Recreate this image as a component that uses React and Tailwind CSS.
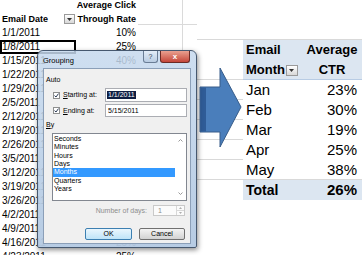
const rows = [
  ["1/1/2011", "10%"],
  ["1/8/2011", "25%"],
  ["1/15/2011", "40%"],
  ["1/22/2011", "18%"],
  ["1/29/2011", "22%"],
  ["2/5/2011", "30%"],
  ["2/12/2011", "28%"],
  ["2/19/2011", "35%"],
  ["2/26/2011", "27%"],
  ["3/5/2011", "20%"],
  ["3/12/2011", "15%"],
  ["3/19/2011", "21%"],
  ["3/26/2011", "19%"],
  ["4/2/2011", "24%"],
  ["4/9/2011", "26%"],
  ["4/16/2011", "25%"],
  ["4/23/2011", "25%"],
];

const months = [
  ["Jan", "23%"],
  ["Feb", "30%"],
  ["Mar", "19%"],
  ["Apr", "25%"],
  ["May", "38%"],
];

function FilterBtn({ className = "" }) {
  return (
    <div
      className={
        "flex items-center justify-center border border-[#9a9a9a] bg-linear-to-b from-white to-[#d8d8d8] " +
        className
      }
    >
      <svg width="5" height="3" viewBox="0 0 5 3">
        <path d="M0 0H5L2.5 3Z" fill="#333" />
      </svg>
    </div>
  );
}

function Check() {
  return (
    <div className="w-[7px] h-[7px] border border-[#8e8f8f] bg-white flex items-center justify-center shrink-0">
      <svg width="5" height="5" viewBox="0 0 5 5">
        <path d="M0.5 2.6L2 4L4.5 0.6" stroke="#2a3a55" strokeWidth="1" fill="none" />
      </svg>
    </div>
  );
}

function Dialog() {
  const items = ["Seconds", "Minutes", "Hours", "Days", "Months", "Quarters", "Years"];
  return (
    <div className="absolute left-[37px] top-[50px] w-[160px] h-[198px] rounded-t-[6px] rounded-b-[2px] border border-[#46586f] bg-linear-to-b from-[#c6d9ee]/85 to-[#b3c9e2]/95 shadow-[1px_2px_5px_rgba(0,0,0,0.45)] flex flex-col px-[5px] pb-[3px] text-[7px] text-black">
      <div className="h-[17px] flex items-start shrink-0">
        <span className="mt-[5px] text-[7.5px] leading-[9px]">Grouping</span>
        <div className="ml-auto mr-[1px] flex gap-[2px]">
          <div className="w-[15px] h-[12px] rounded-b-[3px] border border-t-0 border-[#6a7d95] bg-linear-to-b from-[#e3edf8] to-[#b9cce2] flex items-center justify-center text-[7px] leading-[8px] text-[#2b3b52]">
            ?
          </div>
          <div className="w-[30px] h-[12px] rounded-b-[3px] border border-t-0 border-[#6b2b25] bg-linear-to-b from-[#e8a090] to-[#c4453a] flex items-center justify-center text-[8px] leading-[8px] font-bold text-white">
            x
          </div>
        </div>
      </div>
      <div className="flex-1 border border-[#8b9fb8] bg-[#f0f0f0] flex flex-col">
        <div className="pl-[2px] mt-[7px] leading-[8px]">Auto</div>
        <div className="mt-[4px] h-[14px] flex items-center">
          <div className="w-[61px] flex items-center pl-[9px]">
            <Check />
            <span className="ml-[3px] leading-[8px]">
              <u>S</u>tarting at:
            </span>
          </div>
          <div className="w-[82px] h-full bg-white border border-[#abadb3] flex items-center pl-[1px]">
            <span className="bg-[#0e1d42] text-white px-[1px] leading-[8px]">1/1/2011</span>
          </div>
        </div>
        <div className="mt-[2px] h-[13px] flex items-center">
          <div className="w-[61px] flex items-center pl-[9px]">
            <Check />
            <span className="ml-[3px] leading-[8px]">
              <u>E</u>nding at:
            </span>
          </div>
          <div className="w-[82px] h-full bg-white border border-[#abadb3] flex items-center pl-[2px]">
            <span className="leading-[8px]">5/15/2011</span>
          </div>
        </div>
        <div className="mt-[4px] pl-[2px] leading-[8px]">
          <u>B</u>y
        </div>
        <div className="mt-[4px] ml-[8px] w-[135px] h-[68px] bg-white border border-[#828790] flex">
          <div className="flex-1 flex flex-col pt-[1px]">
            {items.map((it) => (
              <div
                key={it}
                className={
                  "leading-[8.33px] pl-[1px] " + (it === "Months" ? "bg-[#3399ff] text-white" : "")
                }
              >
                {it}
              </div>
            ))}
          </div>
          <div className="w-[11px] flex flex-col items-center justify-between py-[5px]">
            <svg width="5" height="3" viewBox="0 0 5 3">
              <path d="M0.5 2.5L2.5 0.5L4.5 2.5" stroke="#9a9a9a" fill="none" />
            </svg>
            <svg width="5" height="3" viewBox="0 0 5 3">
              <path d="M0.5 0.5L2.5 2.5L4.5 0.5" stroke="#9a9a9a" fill="none" />
            </svg>
          </div>
        </div>
        <div className="mt-[4px] h-[11px] flex items-center justify-end pr-[5px]">
          <span className="mr-[6px] leading-[8px] text-[#8d8d8d]">Number of days:</span>
          <div className="w-[32px] h-full border border-[#c9c9c9] bg-[#fbfbfb] flex">
            <span className="pl-[4px] leading-[9px] text-[#8d8d8d]">1</span>
            <div className="ml-auto w-[8px] flex flex-col border-l border-[#d8d8d8]">
              <div className="flex-1 flex items-center justify-center border-b border-[#d8d8d8]">
                <svg width="3" height="2" viewBox="0 0 3 2">
                  <path d="M0 2L1.5 0L3 2Z" fill="#b0b0b0" />
                </svg>
              </div>
              <div className="flex-1 flex items-center justify-center">
                <svg width="3" height="2" viewBox="0 0 3 2">
                  <path d="M0 0L1.5 2L3 0Z" fill="#b0b0b0" />
                </svg>
              </div>
            </div>
          </div>
        </div>
        <div className="mt-[12px] h-[12px] flex justify-end gap-[7px] pr-[5px]">
          <div className="w-[47px] h-full rounded-[2px] border border-[#3c7fb1] bg-linear-to-b from-[#eaf6fd] to-[#bfe4f8] flex items-center justify-center leading-[8px]">
            OK
          </div>
          <div className="w-[46px] h-full rounded-[2px] border border-[#707070] bg-linear-to-b from-[#f4f4f4] to-[#d2d2d2] flex items-center justify-center leading-[8px]">
            Cancel
          </div>
        </div>
      </div>
    </div>
  );
}

export default function App() {
  return (
    <div className="relative w-[362px] h-[255px] overflow-hidden bg-white flex font-['Liberation_Sans',Arial,sans-serif] text-black">
      {/* left sheet */}
      <div className="w-[138px] shrink-0 flex flex-col text-[10px]">
        <div className="h-[26px] flex shrink-0">
          <div className="w-[76px] flex items-end justify-between pl-[2px] pr-[1px]">
            <span className="font-bold text-[9px] leading-[14px]">Email Date</span>
            <FilterBtn className="w-[11px] h-[10px] mb-[2px]" />
          </div>
          <div className="w-[62px] flex flex-col justify-end items-end pr-[2px] font-bold text-[9px] leading-[14px] whitespace-nowrap">
            <span>Average Click</span>
            <span>Through Rate</span>
          </div>
        </div>
        {rows.map(([d, v], i) => (
          <div key={d} className="h-[14px] flex shrink-0 leading-[14px]">
            <div
              className={
                "w-[76px] pl-[2px] whitespace-nowrap " +
                (i === 1 ? "shadow-[inset_0_0_0_2px_#000]" : "")
              }
            >
              {d}
            </div>
            <div className="w-[62px] text-right pr-[2px]">{v}</div>
          </div>
        ))}
      </div>

      {/* column C gridlines */}
      <div className="w-[59px] shrink-0 flex flex-col">
        <div className="h-[25px] border-b border-[#dadada]">
          <div className="w-[45px] h-full border-r border-[#dadada]" />
        </div>
        <div className="w-[45px] h-[25px] border-r border-[#dadada]" />
      </div>

      {/* right zone */}
      <div className="w-[165px] shrink-0 flex flex-col">
        <div className="h-[40px] border-b border-[#d9d9d9] shrink-0" />
        <div className="flex">
          <div className="w-[46px] shrink-0 flex flex-col">
            <div className="h-[40px] border-b border-[#d9d9d9]" />
            <div className="h-[20px] border-b border-[#d9d9d9]" />
            <div className="h-[20px] border-b border-[#d9d9d9]" />
            <div className="h-[20px] border-b border-[#d9d9d9]" />
            <div className="h-[20px] border-b border-[#d9d9d9]" />
            <div className="h-[20px] border-b border-[#d9d9d9]" />
          </div>
          <div className="w-[119px] shrink-0 flex flex-col">
            <div className="h-[40px] bg-[#dce6f1] border-b border-[#b8cce4] flex text-[13px] font-bold leading-[20px]">
              <div className="w-[59px] pl-[3px] flex flex-col">
                <span>Email</span>
                <div className="flex items-center">
                  <span>Month</span>
                  <FilterBtn className="ml-[1px] w-[12px] h-[11px]" />
                </div>
              </div>
              <div className="flex-1 flex flex-col items-center">
                <span>Average</span>
                <span>CTR</span>
              </div>
            </div>
            {months.map(([m, v], i) => (
              <div
                key={m}
                className={
                  "h-[20px] flex items-center text-[15px] leading-[20px] bg-white " +
                  (i === 4 ? "border-b border-[#d9d9d9]" : "")
                }
              >
                <div className="w-[59px] pl-[3px]">{m}</div>
                <div className="flex-1 text-right pr-[5px]">{v}</div>
              </div>
            ))}
            <div className="h-[20px] flex items-center bg-[#dce6f1] font-bold leading-[20px]">
              <div className="w-[59px] pl-[3px] text-[14px]">Total</div>
              <div className="flex-1 text-right pr-[5px] text-[15px]">26%</div>
            </div>
          </div>
        </div>
      </div>

      {/* arrow */}
      <svg
        className="absolute left-[199px] top-[66px]"
        width="44"
        height="83"
        viewBox="0 0 44 83"
      >
        <polygon
          points="1,21 21,21 21,2 42,41 21,81 21,66 1,66"
          fill="#4a7ebb"
          stroke="#385d8a"
          strokeWidth="1"
        />
        <rect x="1.5" y="21.5" width="5.5" height="44" fill="#2f5c97" />
      </svg>

      <Dialog />
    </div>
  );
}
